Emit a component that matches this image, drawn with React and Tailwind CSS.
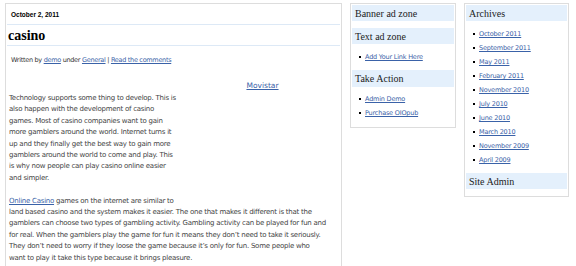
import React from "react";

const archives = [
  "October 2011", "September 2011", "May 2011", "February 2011", "November 2010",
  "July 2010", "June 2010", "March 2010", "November 2009", "April 2009",
];

const para1 = [
  "Technology supports some thing to develop. This is",
  "also happen with the development of casino",
  "games. Most of casino companies want to gain",
  "more gamblers around the world. Internet turns it",
  "up and they finally get the best way to gain more",
  "gamblers around the world to come and play. This",
  "is why now people can play casino online easier",
  "and simpler.",
];

const para2 = [
  "land based casino and the system makes it easier. The one that makes it different is that the",
  "gamblers can choose two types of gambling activity. Gambling activity can be played for fun and",
  "for real. When the gamblers play the game for fun it means they don\u2019t need to take it seriously.",
  "They don\u2019t need to worry if they loose the game because it\u2019s only for fun. Some people who",
  "want to play it take this type because it brings pleasure.",
];

const Heading = ({ children, className = "" }) => (
  <div className={`h-[16px] flex items-center pl-[3px] bg-[#e4f0fc] font-['Liberation_Serif',serif] text-[10px] text-[#222] ${className}`}>
    {children}
  </div>
);

const Item = ({ children }) => (
  <li className="h-[14px] flex items-center pl-[7px] gap-[4px]">
    <span className="w-[2px] h-[2px] bg-black shrink-0" />
    <a className="text-[6.5px] tracking-[-0.2px] text-[#3a62a8] underline leading-[8px]">{children}</a>
  </li>
);

export default function App() {
  return (
    <div className="flex items-start bg-white pl-[5px] pt-[3px] font-['DejaVu_Sans',sans-serif] text-[#444] w-[576px] h-[266px] overflow-hidden">
      <main className="w-[337px] h-[290px] shrink-0 border border-[#dddddd] px-[1px]">
        <div className="h-[21px] border-b border-[#dde9f6] flex items-center pl-[4px] pt-[1px] font-['Liberation_Sans',sans-serif] text-[6.5px] font-bold text-black">
          October 2, 2011
        </div>
        <div className="h-[21px] border-b border-[#dde9f6] flex items-center pl-[1px] font-['Liberation_Serif',serif] text-[14px] font-bold text-black">
          casino
        </div>
        <div className="mt-[9px] pl-[4px] text-[6.5px] tracking-[-0.3px] leading-[10px] text-[#333]">
          Written by <a className="text-[#3a62a8] underline">demo</a> under{" "}
          <a className="text-[#3a62a8] underline">General</a> |{" "}
          <a className="text-[#3a62a8] underline">Read the comments</a>
        </div>
        <div className="mt-[15px] pl-[2px] text-[7px] tracking-[-0.25px] leading-[11.4px]">
          <div className="float-right w-[150px] h-[120px] pr-[5px] text-center">
            <a className="text-[7.5px] tracking-[0px] leading-[12px] text-[#3a62a8] underline">Movistar</a>
          </div>
          <p className="pt-[13px] whitespace-nowrap">
            {para1.map((l, i) => (
              <React.Fragment key={i}>
                {l}
                <br />
              </React.Fragment>
            ))}
          </p>
          <p className="mt-[11.4px] whitespace-nowrap">
            <a className="text-[#3a62a8] underline">Online Casino</a> games on the internet are similar to
            <br />
            {para2.map((l, i) => (
              <React.Fragment key={i}>
                {l}
                <br />
              </React.Fragment>
            ))}
          </p>
        </div>
      </main>

      <aside className="ml-[8px] w-[106px] shrink-0 border border-[#dddddd] p-[1px] pb-[7px]">
        <Heading>Banner ad zone</Heading>
        <Heading className="mt-[7px]">Text ad zone</Heading>
        <ul className="pt-[6px]">
          <Item>Add Your Link Here</Item>
        </ul>
        <Heading className="mt-[6px] h-[17px]">Take Action</Heading>
        <ul className="pt-[5px]">
          <Item>Admin Demo</Item>
          <Item>Purchase OIOpub</Item>
        </ul>
      </aside>

      <aside className="ml-[8px] w-[105px] shrink-0 border border-[#dddddd] p-[1px] pb-[7px]">
        <Heading>Archives</Heading>
        <ul className="pt-[6px]">
          {archives.map((a) => (
            <Item key={a}>{a}</Item>
          ))}
        </ul>
        <Heading className="mt-[6px]">Site Admin</Heading>
      </aside>
    </div>
  );
}
